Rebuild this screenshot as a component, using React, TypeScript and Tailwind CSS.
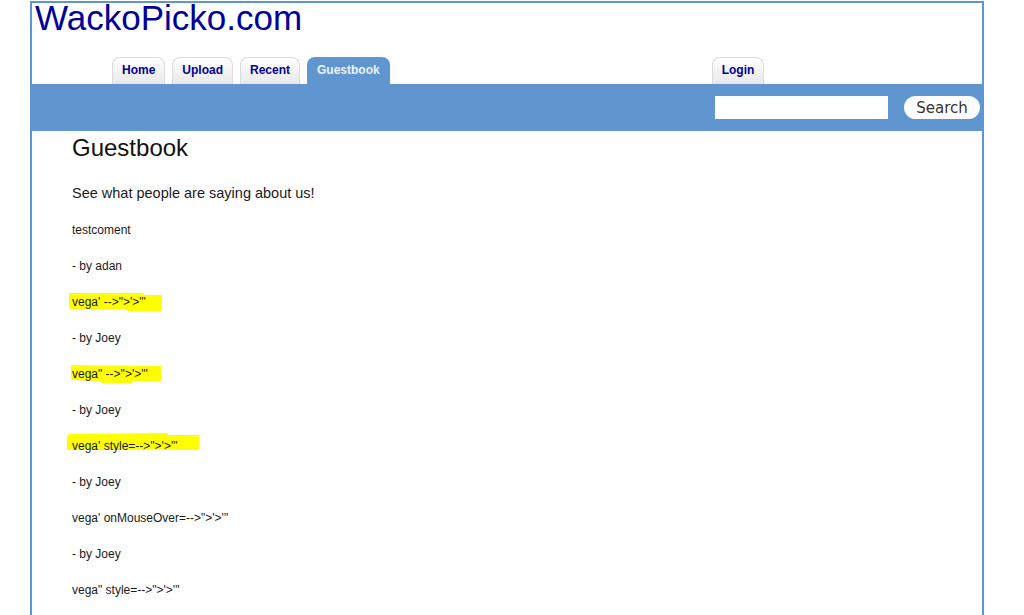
import React from "react";

type Row = { text: string; hl?: { left: number; top: number; w: number; h: number; pts: string } };

const rows: Row[] = [
  { text: "testcoment" },
  { text: "- by adan" },
  {
    text: "vega' -->\">'>'\"",
    hl: { left: -3, top: 2, w: 93, h: 18, pts: "0,0 74,0 75,2 93,2 93,18 58,18 57,16 0,16" },
  },
  { text: "- by Joey" },
  {
    text: "vega\" -->\">'>'\"",
    hl: { left: -1, top: 2, w: 90, h: 18, pts: "0,0 90,1 90,16 62,16 61,18 30,18 30,16 0,15" },
  },
  { text: "- by Joey" },
  {
    text: "vega' style=-->\">'>'\"",
    hl: { left: -5, top: -2, w: 132, h: 17, pts: "2,1 100,0 101,2 132,2 132,17 0,17 0,3" },
  },
  { text: "- by Joey" },
  { text: "vega' onMouseOver=-->\">'>'\"" },
  { text: "- by Joey" },
  { text: "vega\" style=-->\">'>'\"" },
];

function Tab({ label, active }: { label: string; active?: boolean }) {
  return (
    <div
      className={
        active
          ? "h-[27px] rounded-t-[8px] bg-[#6096d0] px-[10px] text-[12px] font-bold leading-[26px] text-[#eef3fb]"
          : "h-[27px] rounded-t-[8px] border border-b-0 border-[#dcdcdc] bg-gradient-to-b from-white to-[#e8e8e8] px-[9px] text-[12px] font-bold leading-[24px] text-[#000099]"
      }
    >
      {label}
    </div>
  );
}

export default function App() {
  return (
    <div className="h-[615px] overflow-hidden bg-white font-['Liberation_Sans',Arial,sans-serif]">
      <div className="ml-[30px] mt-[1px] h-[620px] w-[954px] border-2 border-b-0 border-[#6096d0]">
        <div className="-mt-[5px] h-[40px] pl-[3px] text-[35px] leading-[40px] text-[#000099]">WackoPicko.com</div>
        <nav className="mt-[19px] flex h-[27px] items-end gap-[7px] pl-[80px]">
          <Tab label="Home" />
          <Tab label="Upload" />
          <Tab label="Recent" />
          <Tab label="Guestbook" active />
          <div className="ml-[315px]">
            <Tab label="Login" />
          </div>
        </nav>
        <div className="flex h-[47px] items-center justify-end bg-[#6096d0] pr-[2px]">
          <input className="h-[23px] w-[173px] bg-white outline-none" />
          <button className="ml-[16px] h-[23px] w-[76px] rounded-full bg-white font-['DejaVu_Sans',sans-serif] text-[15px] leading-[24px] text-[#333]">
            Search
          </button>
        </div>
        <div className="pl-[40px] text-[#1a1a1a]">
          <h2 className="mt-[3px] text-[24px] leading-[28px] text-[#111]">Guestbook</h2>
          <p className="mt-[22px] text-[14.5px] leading-[18px]">See what people are saying about us!</p>
          <div className="mt-[21px] flex flex-col gap-[22px] text-[12px] leading-[14px]">
            {rows.map((r, i) => (
              <div key={i} className="relative h-[14px]">
                {r.hl && (
                  <svg
                    className="absolute"
                    style={{ left: r.hl.left, top: r.hl.top - 4, width: r.hl.w, height: r.hl.h }}
                    viewBox={`0 0 ${r.hl.w} ${r.hl.h}`}
                  >
                    <polygon points={r.hl.pts} fill="#ffff00" />
                  </svg>
                )}
                <span className="relative">{r.text}</span>
              </div>
            ))}
          </div>
        </div>
      </div>
    </div>
  );
}
